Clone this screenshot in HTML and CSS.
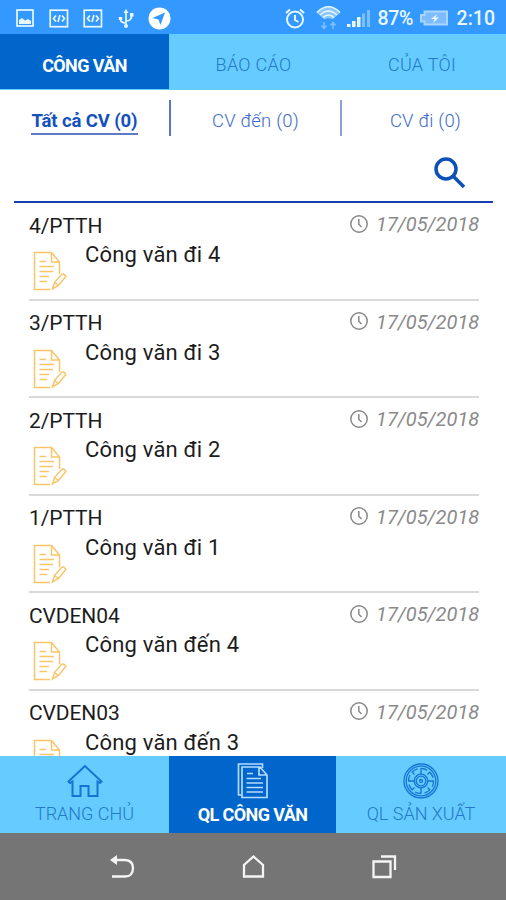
FILE: index.html
```html
<!DOCTYPE html>
<html lang="vi">
<head>
  <meta charset="UTF-8">
  <meta name="viewport" content="width=device-width, initial-scale=1">
  <title>Công văn</title>
  <link rel="stylesheet" href="styles.css">
</head>

<body>

<svg class="icon-defs" width="0" height="0">
  <symbol id="i-note" viewBox="0 0 34 40">
    <path d="M17 38.500H1.500V1.500H18.500L26.500 11V23M18.500 1.500V11H26.500M6.500 10.500H13M6.500 15.500H21M6.500 20.500H20M6.500 25.500H16M6.500 30.500H14"/>
    <path d="M19.500 38L21.500 31.500L28.500 23.500Q31 22 32.800 25.500L25.500 34.500ZM21.500 31.500L25.500 34.500"/>
  </symbol>
  <symbol id="i-clock" viewBox="0 0 18 18">
    <circle cx="9" cy="9" r="8.200"/>
    <path d="M8.800 4V9.200L11.500 12"/>
  </symbol>
  <symbol id="i-code" viewBox="0 0 20 19">
    <rect x="1.200" y="1.200" width="17.300" height="16.500"/>
    <path d="M7 6.500L4.500 9.500L7 12.500M13 6.500L15.500 9.500L13 12.500M11 6L9 13"/>
  </symbol>
</svg>

<div class="app">
  <div class="status-bar">
    <div class="status-left">
      <svg width="18" height="18" viewBox="0 0 18 18"><rect x="1" y="1" width="16" height="16"/><path class="solid" d="M3 15V11L6 9L9 11.500L12 10L15 12V15Z"/></svg>
      <svg width="20" height="19" viewBox="0 0 20 19"><use href="#i-code"/></svg>
      <svg width="20" height="19" viewBox="0 0 20 19"><use href="#i-code"/></svg>
      <svg width="16" height="19" viewBox="0 0 16 19"><path d="M8 3V17M8 14Q2 14 2.500 9M8 12Q14 12 13.500 6"/><path class="solid" d="M8 0L10.500 4H5.500ZM12 4H15.500V7.500H12ZM0.800 8H4.200V11H0.800Z"/><circle class="solid" cx="8" cy="17" r="2"/></svg>
      <svg width="23" height="23" viewBox="0 0 23 23"><circle class="solid" cx="11.500" cy="11.500" r="11"/><path class="plane" d="M17 5.500L4.500 11L10.500 12.500L12.500 18Z"/></svg>
    </div>
    <div class="status-right">
      <svg width="20" height="21" viewBox="0 0 20 21"><circle cx="10" cy="11.500" r="8"/><path d="M10 7V12L13.500 14M1 5L5 1.500M19 5L15 1.500"/></svg>
      <svg class="wifi" width="25" height="25" viewBox="0 0 25 25"><path class="fan" d="M0.500 7.500Q12.500-4 24.500 7.500L16.500 14.500Q12.500 12 8.500 14.500Z"/><path d="M1 7.500Q12.500-4 24 7.500M4 10Q12.500 2 21 10M7 12.500Q12.500 7.500 18 12.500"/><path class="faint" d="M8 17V23M5.500 20.500L8 23.500L10.500 20.500M17 24V18M14.500 20.500L17 17.500L19.500 20.500"/></svg>
      <svg class="signal" width="23" height="17" viewBox="0 0 23 17"><path class="solid" d="M0 14H3.500V17H0ZM5 11H8.500V17H5ZM10 7H13.500V17H10Z"/><path class="solid dim" d="M15 3.500H18V17H15ZM20 0H23V17H20Z"/></svg>
      <span class="percent">87%</span>
      <svg class="battery" width="28" height="16" viewBox="0 0 28 16"><path class="fill" d="M4.500 1.500H27V14.500H4.500V11.500H1V5H4.500Z"/><path class="solid" d="M17 4L11 9H14.500L13 13L19 7.500H15.500Z"/></svg>
      <span class="time">2:10</span>
    </div>
  </div>

  <div class="tabs">
    <div class="tab active"><span>CÔNG VĂN</span></div>
    <div class="tab"><span>BÁO CÁO</span></div>
    <div class="tab"><span>CỦA TÔI</span></div>
  </div>

  <div class="filters">
    <div class="filter active"><span>Tất cả CV (0)</span></div>
    <div class="filter"><span>CV đến (0)</span></div>
    <div class="filter"><span>CV đi (0)</span></div>
  </div>

  <div class="search">
    <svg width="32" height="32" viewBox="0 0 32 32"><circle cx="12" cy="12" r="10"/><path d="M19.500 19.500L30 30"/></svg>
  </div>

  <div class="list">
    <div class="item">
      <div class="item-head"><span class="code">4/PTTH</span><svg class="clock"><use href="#i-clock"/></svg><span class="date">17/05/2018</span></div>
      <div class="item-body"><svg class="note"><use href="#i-note"/></svg><span class="name">Công văn đi 4</span></div>
    </div>
    <div class="item">
      <div class="item-head"><span class="code">3/PTTH</span><svg class="clock"><use href="#i-clock"/></svg><span class="date">17/05/2018</span></div>
      <div class="item-body"><svg class="note"><use href="#i-note"/></svg><span class="name">Công văn đi 3</span></div>
    </div>
    <div class="item">
      <div class="item-head"><span class="code">2/PTTH</span><svg class="clock"><use href="#i-clock"/></svg><span class="date">17/05/2018</span></div>
      <div class="item-body"><svg class="note"><use href="#i-note"/></svg><span class="name">Công văn đi 2</span></div>
    </div>
    <div class="item">
      <div class="item-head"><span class="code">1/PTTH</span><svg class="clock"><use href="#i-clock"/></svg><span class="date">17/05/2018</span></div>
      <div class="item-body"><svg class="note"><use href="#i-note"/></svg><span class="name">Công văn đi 1</span></div>
    </div>
    <div class="item">
      <div class="item-head"><span class="code">CVDEN04</span><svg class="clock"><use href="#i-clock"/></svg><span class="date">17/05/2018</span></div>
      <div class="item-body"><svg class="note"><use href="#i-note"/></svg><span class="name">Công văn đến 4</span></div>
    </div>
    <div class="item">
      <div class="item-head"><span class="code">CVDEN03</span><svg class="clock"><use href="#i-clock"/></svg><span class="date">17/05/2018</span></div>
      <div class="item-body"><svg class="note"><use href="#i-note"/></svg><span class="name">Công văn đến 3</span></div>
    </div>
  </div>

  <div class="bottom-nav">
    <div class="nav-item">
      <svg width="36" height="36" viewBox="0 0 36 36"><path d="M18 3L1.500 18.500L3 20L5.500 18.500V33H13.500V23H21.500V33H30.500V18.500L33 20L34.500 18.500Z"/></svg>
      <span>TRANG CHỦ</span>
    </div>
    <div class="nav-item active">
      <svg width="36" height="36" viewBox="0 0 36 36"><path d="M7 32H3.500V1H27.500V5M7 34.500V4H25L32 12V34.500ZM24 4V12H32M12 10.500H18M11.500 15.500H26M11.500 20H28M11.500 24.500H28M11.500 29H28"/></svg>
      <span>QL CÔNG VĂN</span>
    </div>
    <div class="nav-item">
      <svg class="wheel" width="36" height="36" viewBox="0 0 36 36"><circle cx="18" cy="18" r="17"/><circle cx="18" cy="18" r="14.800"/><circle class="holes" cx="18" cy="18" r="12.500"/><circle cx="18" cy="18" r="6.800"/><circle cx="18" cy="18" r="4.800"/><circle cx="18" cy="18" r="1.500"/><path d="M18 5V11M18 25V31M5 18H11M25 18H31M8.800 8.800L11.500 11.500M24.500 24.500L27.200 27.200M27.200 8.800L24.500 11.500M11.500 24.500L8.800 27.200"/></svg>
      <span>QL SẢN XUẤT</span>
    </div>
  </div>

  <div class="system-nav">
    <svg width="26" height="26" viewBox="0 0 26 26"><path d="M4 6H16Q24 6.500 24 14Q24 22.500 16 22.500H3"/><path class="solid" d="M1 6L8 1V11Z"/></svg>
    <svg width="26" height="26" viewBox="0 0 26 26"><path d="M4 22.500V11L13.500 2.500L23 11V22.500Z"/></svg>
    <svg width="26" height="26" viewBox="0 0 26 26"><path d="M2.500 7.500H19.500V23H2.500ZM10 2.500H24V16"/></svg>
  </div>
</div>

</body>
</html>
```
FILE: styles.css
```css
* {
  box-sizing: border-box;
}
body {
  margin: 0;
  font-family: Roboto, "Noto Sans", sans-serif;
  background: #fff;
}
svg {
  flex: none;
  fill: none;
  stroke: currentColor;
  stroke-width: 2;
}
.icon-defs {
  position: absolute;
}
.solid {
  fill: currentColor;
  stroke: none;
}
.app {
  width: 506px;
  height: 900px;
  display: flex;
  flex-direction: column;
  overflow: hidden;
}

/* status bar */
.status-bar {
  height: 34px;
  display: flex;
  justify-content: space-between;
  align-items: center;
  padding: 2px 11px 0 16px;
  background: #3399ff;
  color: #e9f8ff;
}
.status-left, .status-right {
  display: flex;
  align-items: center;
}
.status-left {
  gap: 14.500px;
}
.status-left svg {
  stroke-width: 1.7;
}
.status-left svg:last-child {
  color: #fff;
}
.plane {
  fill: #3399ff;
  stroke: none;
}
.wifi {
  margin: -2px 0 0 11px;
  stroke-width: 1.500;
}
.fan {
  fill: #8cc6ff;
  stroke: none;
}
.faint, .dim {
  opacity: 0.4;
}
.signal {
  margin-left: 6px;
}
.percent {
  margin-left: 8px;
  width: 37px;
  font-size: 19.500px;
  font-weight: 500;
  letter-spacing: -0.4px;
}
.battery {
  margin-left: 5px;
  stroke: #a9d6ff;
}
.battery .fill {
  fill: #7cbcff;
}
.time {
  margin-left: 9px;
  font-size: 19.500px;
  font-weight: 500;
}

/* top tabs */
.tabs {
  height: 56px;
  display: grid;
  grid-template-columns: 169px 169px 168px;
  background: #66ccff;
}
.tab {
  display: flex;
  align-items: center;
  justify-content: center;
  padding-top: 5px;
  color: #2379c8;
  font-size: 18px;
  font-weight: 300;
  letter-spacing: 0.3px;
}
.tab.active {
  height: 55px;
  padding-top: 7px;
  background: #0066cc;
  color: #fff;
  font-weight: 700;
  letter-spacing: -0.6px;
}

/* filters */
.filters {
  height: 58px;
  display: grid;
  grid-template-columns: 171px 171px 164px;
  padding-top: 10px;
}
.filter {
  height: 36px;
  text-align: center;
  padding-top: 10px;
  border-right: 2px solid #8c9fdb;
  color: #3d6bca;
  font-size: 18.500px;
  font-weight: 300;
  letter-spacing: 0.2px;
  line-height: 23px;
}
.filter:last-child {
  border-right: none;
  padding-left: 3px;
}
.filter.active {
  color: #1450be;
  font-weight: 700;
  letter-spacing: -0.1px;
  border-right-color: #5576ca;
}
.filter.active span {
  display: inline-block;
  border-bottom: 2px solid #6078c8;
}

/* search */
.search {
  height: 55px;
  margin: 0 13px 0 14px;
  padding: 9px 27px 0 0;
  display: flex;
  justify-content: flex-end;
  border-bottom: 2px solid #1440b0;
  color: #0d50b8;
}
.search svg {
  stroke-width: 3.500;
}

/* list */
.list {
  height: 553px;
  padding: 0 27px 0 29px;
  overflow: hidden;
}
.item {
  height: 97.500px;
  padding-top: 9px;
  border-bottom: 2px solid #d9d9d9;
}
.item-head {
  height: 26px;
  display: flex;
  align-items: center;
}
.code {
  flex: 1;
  padding-top: 1px;
  color: #1c1c1c;
  font-size: 21px;
  letter-spacing: -0.1px;
}
.clock {
  width: 18px;
  height: 18px;
  margin: -3px 8px 0 0;
  color: #888;
  stroke-width: 1.500;
}
.date {
  width: 103px;
  margin-top: -2px;
  color: #8a8a8a;
  font-size: 20px;
  font-style: italic;
}
.item-body {
  display: flex;
  padding-left: 4px;
}
.note {
  width: 34px;
  height: 40px;
  margin: 13px 18px 0 0;
  color: #f9c568;
  stroke-width: 1.500;
}
.name {
  padding-top: 4px;
  color: #1c1c1c;
  font-size: 22px;
  letter-spacing: 0.180px;
  line-height: 26px;
}

/* bottom navigation */
.bottom-nav {
  height: 77px;
  display: grid;
  grid-template-columns: 169px 167px 170px;
  background: #66ccff;
}
.nav-item {
  display: flex;
  flex-direction: column;
  align-items: center;
  padding-top: 7px;
  color: #2379c8;
  font-size: 18px;
  font-weight: 300;
}
.nav-item svg {
  color: #1673d2;
}
.nav-item span {
  margin-top: 4px;
  line-height: 22px;
}
.nav-item.active {
  background: #0066cc;
  color: #fff;
  font-weight: 700;
  letter-spacing: -0.6px;
}
.nav-item.active span {
  margin-top: 5px;
}
.nav-item.active svg {
  color: #b5daff;
  stroke-width: 1.700;
}
.nav-item .wheel {
  stroke-width: 1.300;
}
.holes {
  stroke-dasharray: 6 3.817;
}

/* android buttons */
.system-nav {
  height: 67px;
  display: flex;
  justify-content: center;
  align-items: center;
  gap: 105px;
  background: #757575;
  color: #f5f5f5;
}
.system-nav svg {
  stroke-width: 2.300;
}
```
